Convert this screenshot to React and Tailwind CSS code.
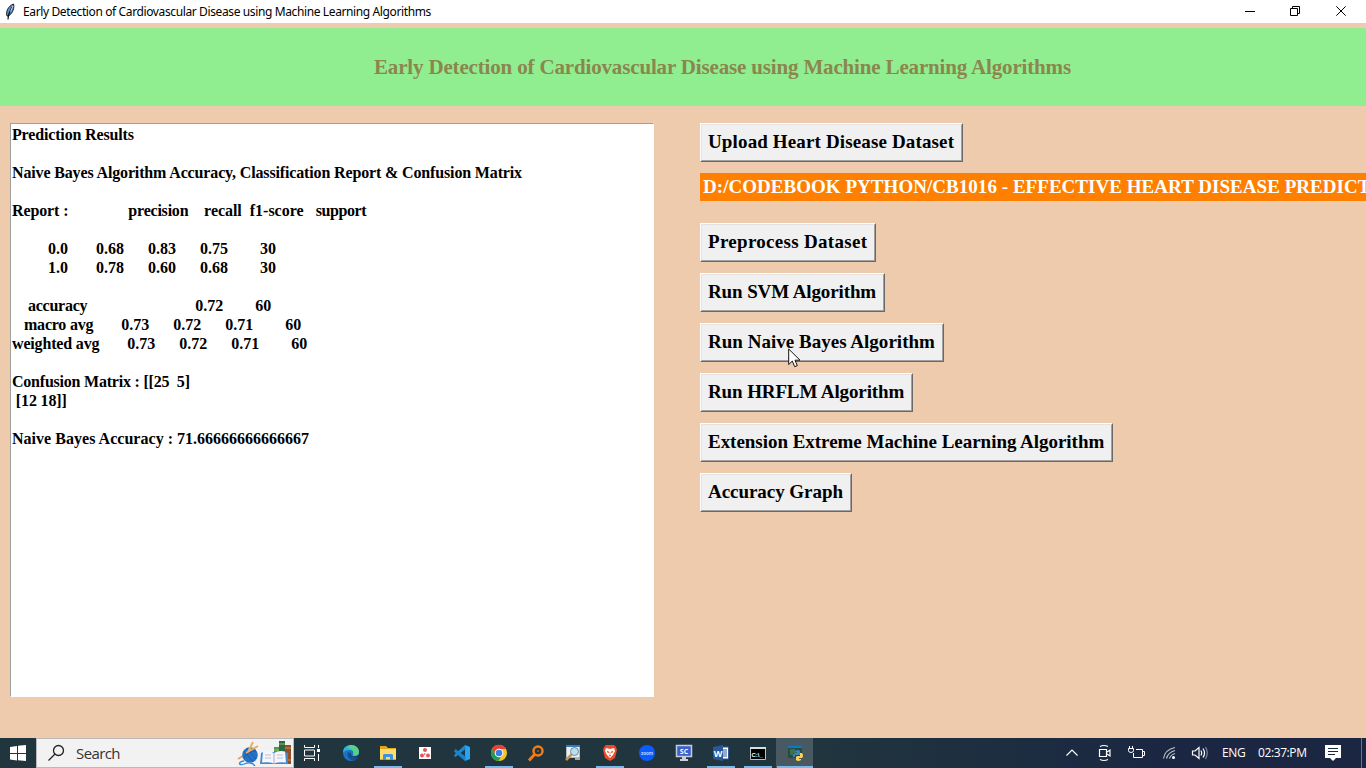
// each line is a list of [text, letter spacing]
const report = [
  [["Prediction Results", "tracking-[-0.16px]"]],
  [],
  [["Naive Bayes Algorithm Accuracy, Classification Report & Confusion Matrix", "tracking-[-0.145px]"]],
  [],
  [
    ["Report :", "tracking-[-0.12px]"],
    ["               "],
    ["precision", "tracking-[-0.22px]"],
    ["    recall", "tracking-[-0.05px]"],
    ["  f1-score"],
    ["   "],
    ["support", "tracking-[-0.4px]"],
  ],
  [],
  [["         0.0       0.68      0.83      0.75        30"]],
  [["         1.0       0.78      0.60      0.68        30"]],
  [],
  [["    "], ["accuracy", "tracking-[-0.25px]"], ["                           0.72        60"]],
  [["   "], ["macro avg", "tracking-[-0.22px]"], ["       0.73      0.72      0.71        60"]],
  [["weighted avg", "tracking-[-0.17px]"], ["       0.73      0.72      0.71        60"]],
  [],
  [["Confusion Matrix : ", "tracking-[-0.22px]"], ["[[25  5]", "tracking-[-0.2px]"]],
  [[" [12 18]]", "tracking-[-0.15px]"]],
  [],
  [["Naive Bayes Accuracy : ", "tracking-[0.03px]"], ["71.66666666666667"]],
];

const algorithmButtons = [
  { label: "Preprocess Dataset", size: "w-[176px] tracking-[0.3px]" },
  { label: "Run SVM Algorithm", size: "w-[185px] tracking-[-0.11px]" },
  { label: "Run Naive Bayes Algorithm", size: "w-[244px] tracking-[0.02px]" },
  { label: "Run HRFLM Algorithm", size: "w-[213px] tracking-[-0.12px]" },
  { label: "Extension Extreme Machine Learning Algorithm", size: "w-[413px] tracking-[-0.03px]" },
  { label: "Accuracy Graph", size: "w-[152px] tracking-[-0.05px]" },
];

const TkButton = ({ label, size }) => (
  <button
    className={`${size} h-[39px] border border-t-white border-l-white border-r-[#696969] border-b-[#696969] bg-[#f0f0f0]`}
  >
    <div className="flex h-full items-center border border-t-[#e3e3e3] border-l-[#e3e3e3] border-r-[#a0a0a0] border-b-[#a0a0a0] pb-0.5 pl-1.5 text-[19px] leading-none font-bold whitespace-pre">
      {label}
    </div>
  </button>
);

const TitleBar = () => (
  <div className="flex h-[23px] items-center bg-white pl-1 font-['Noto_Sans','Open_Sans',sans-serif]">
    <svg width="13" height="18" viewBox="0 0 13 18">
      <path d="M3 13C1.500 9 4 3 9.500 1c1 3-.2 9-5 12z" fill="#5b8fd0" stroke="#152033" />
      <path d="M4 16.500 4.500 12 8 4" fill="none" stroke="#0b1220" strokeWidth="1.200" />
      <path d="M6.500 8.500 9 3" stroke="#c7dcf4" />
    </svg>
    <div className="ml-1.5 text-[12px] leading-none tracking-[-0.38px] whitespace-pre text-black">
      Early Detection of Cardiovascular Disease using Machine Learning Algorithms
    </div>
    <svg className="ml-auto" width="126" height="20" viewBox="1240 0 126 20" fill="none" stroke="#000">
      <path d="M1245 9.500h10M1290.500 6.500h7v7h-7zM1292.500 6v-1.500h7v7h-2" />
      <path d="m1336.300 4.300 9.400 9.400m0-9.400-9.400 9.400" />
    </svg>
  </div>
);

const AppIcon = ({ children, open, active }) => (
  <div
    className={`flex h-[30px] w-[37px] flex-col items-center justify-between ${active ? "bg-[#485962]" : ""}`}
  >
    <svg className="mt-[6px]" width="18" height="18" viewBox="0 0 18 18">
      {children}
    </svg>
    <div className={`h-0.5 ${active ? "w-[36px]" : "w-7"} ${open ? "bg-[#76b9ed]" : ""}`} />
  </div>
);

const SearchBox = () => (
  <div className="flex h-[30px] w-[258px] items-center border border-[#b9b9b9] bg-[#f2f2f2]">
    <svg className="ml-[10px]" width="18" height="18" viewBox="0 0 18 18" fill="none" stroke="#222" strokeWidth="1.300">
      <circle cx="11.500" cy="6.500" r="5" />
      <path d="m8 10-6.500 6.500" />
    </svg>
    <div className="ml-[11px] text-[15px] leading-none tracking-[-0.6px] text-[#333]">Search</div>
    <svg className="ml-auto" width="56" height="28" viewBox="0 0 56 28">
      {/* yarn ball with needles */}
      <path d="m1 20 8-5" stroke="#e5a45d" strokeWidth="1.800" />
      <circle cx="13" cy="16" r="7.800" fill="#2671c4" />
      <path d="m7 12 9 11M10 9l9 11M7 19c3-5 7-7 12-7" stroke="#1a56a3" strokeWidth=".8" fill="none" />
      <path d="M9 14 21 7M11 13 16 3" stroke="#e9ad6a" strokeWidth="2" />
      <path d="M7 22c-6 1-6 5 0 3 5-2 9-1 11 2" stroke="#3186d8" strokeWidth="1.300" fill="none" />
      {/* standing books */}
      <path d="M37 8h5v10h-5z" fill="#4f9a50" />
      <path d="M42 2h6v18h-6z" fill="#28693f" />
      <path d="M42 5h6M37 11h5" stroke="#a5b45d" />
      <path d="M48 6h6v19h-6z" fill="#954d28" />
      <path d="M48 9h6m-6 12h6" stroke="#cf914b" />
      {/* open book */}
      <path d="m24 14 2-1h22l3 1v11H23z" fill="#4088d0" />
      <path d="M26 12.500q6-1.500 11 1.500 5-3 11-1.500l1 11q-7-1-12 1-5-2-12-1z" fill="#f5f5fb" />
      <path d="M28 16h6m-6 3h6m6-3h6m-6 3h6" stroke="#bfc1d8" />
      <path d="M37 14v10" stroke="#a7a9c9" />
    </svg>
  </div>
);

const Tray = () => (
  <div className="ml-auto flex h-[30px] items-center text-white">
    <svg width="154" height="30" viewBox="1060 0 154 30" fill="none" stroke="#fff" strokeWidth="1.200">
      <path d="m1066.500 17.500 5.500-5.500 5.500 5.500" />
      <path d="M1099.500 11.500h7v7h-7zM1107 14l3-2v6l-3-2M1100 8.500q4-2 8 0m-8 13q4 2 8 0" />
      <path d="M1136 11.500h6.500v8h-9V15M1143 13.500h1.500v4h-1.500" strokeWidth="1" />
      <path d="M1128.500 10.500h5v2q0 2-2.500 2t-2.500-2zM1129.500 10V8m3 2V8" strokeWidth="1" />
      <path d="M1163.500 20.500q1.500-9 11.500-11M1166.500 20.500q1.500-6 8.500-8M1169.500 20.500q1-3.500 5.500-5" stroke="#b9c0ca" />
      <circle cx="1173.500" cy="19.500" r="1.500" fill="#fff" stroke="none" />
      <path d="M1192.500 13h2.500l4-3.500v11l-4-3.500h-2.500zM1201 12.500q1.500 2.500 0 5M1203 10.500q3 4.500 0 9" />
      <path d="M1205.500 9q3.500 6 0 12" stroke="#7c8799" />
    </svg>
    <div className="ml-[8px] w-[36px] text-[12px] tracking-[-0.35px]">ENG</div>
    <div className="w-[67px] text-[12px] tracking-[-0.4px] whitespace-nowrap">02:37:PM</div>
    <svg width="41" height="30" viewBox="1325 0 41 30">
      <path d="M1325 7h16v13h-5l-3 3-3-3h-5z" fill="#fff" />
      <path d="M1328 10.500h10m-10 3h10m-10 3h7" stroke="#1b2841" />
      <path d="M1361.500 0v30" stroke="#69758a" />
    </svg>
  </div>
);

const Taskbar = () => (
  <div className="flex h-[30px] bg-linear-to-r from-[#20353e] from-60% to-[#1b2742] to-85% font-['Open_Sans','Noto_Sans',sans-serif]">
    <svg width="36" height="30" viewBox="0 0 36 30" fill="#fff">
      <path d="m10 9 7-1v7h-7zM18 7.800 26 7v8h-8zM10 16h7v6.500l-7-1zM18 16h8v7l-8-.8z" />
    </svg>
    <SearchBox />
    <AppIcon>
      <path d="M1.500 1v2.500h10V1M1.500 17v-2.500h10V17M1.500 6h10v6h-10zM15.500 1v3m0 6v7" transform="translate(-1 0)" fill="none" stroke="#fff" />
      <path d="M13 5h3v3h-3z" fill="#fff" />
    </AppIcon>
    <div className="ml-px flex">
      <AppIcon>
        <circle cx="9" cy="9" r="8" fill="#1b74c8" />
        <path d="M1 9C1 3 5 1 9 1c5 0 8 3.500 8 7 0 3-3 4-6.500 3.500C12.500 9 11 6 7.500 6 4 6 2 7 1 9z" fill="#2db2dc" />
        <path d="M8 1c6-.5 9 3.500 9 7 0 3-3 4-6.500 3.500C13 9 11 4 5 4z" fill="#58d184" />
        <path d="M6 8c-2 4 1 8.500 6 8.500 2-.5 3.500-2 4.500-4-4 2.500-9 1-8.500-3.500z" fill="#124f9c" />
        <path d="M9.500 7.500c-1.500 1.500-1 4 1.500 4.800 2 .5 4 .2 5.500-1l1-.8-1 2.200c-4 2.200-8.800.6-8.500-3.200z" fill="#20353e" />
      </AppIcon>
      <AppIcon open>
        <path d="M1 2h6l2 2h8v12H1z" fill="#e4a51b" />
        <path d="M1 5h16v10H1z" fill="#ffda6d" />
        <path d="M4 16v-5l1-1h8l1 1v5h-3v-3H7v3z" fill="#3c94dd" />
      </AppIcon>
      <AppIcon>
        <path d="M3 3h12v12H3z" fill="#fff" />
        <g fill="#e45459">
          <circle cx="9" cy="6" r="2" />
          <circle cx="6" cy="11.500" r="2" />
          <circle cx="12" cy="11.500" r="2" />
          <path d="m8 9 2 1-2 1z" />
        </g>
      </AppIcon>
      <AppIcon>
        <path d="m12 1 5 2v12l-5 2V1z" fill="#27a5f2" />
        <path d="m12 1-10 9-1 2 1.500 1L13 4.500z" fill="#168bd3" />
        <path d="m2.500 5 10.500 8-1 4L1 7.500z" fill="#1b83cb" />
      </AppIcon>
      <AppIcon open>
        <circle cx="9" cy="9" r="8" fill="#f4c52b" />
        <path d="M2 5A8 8 0 0 1 16 5H9L5.500 11z" fill="#e34234" />
        <path d="M2 5A8 8 0 0 0 8.500 17L12 11H6z" fill="#219b55" />
        <circle cx="9" cy="9" r="4.300" fill="#fff" />
        <circle cx="9" cy="9" r="3.300" fill="#3c7ce7" />
      </AppIcon>
      <AppIcon>
        <g fill="none" stroke="#f47b13">
          <circle cx="11" cy="7" r="4.500" strokeWidth="2.500" />
          <path d="m7.500 10.500-5.500 6" strokeWidth="3" />
        </g>
        <circle cx="11" cy="7" r="1" fill="#a9581d" />
      </AppIcon>
      <AppIcon>
        <path d="M2.500 1.500h13v12h-13z" fill="#eee" stroke="#b3bbc2" />
        <path d="M2 1h14v2H2z" fill="#367bb9" />
        <path d="m8 10-6 6" stroke="#c0985b" strokeWidth="2.500" />
        <circle cx="10.500" cy="7.500" r="4" fill="#b9def0" stroke="#718b9b" />
        <path d="M11 14h5v2h-5z" fill="#aaa" />
      </AppIcon>
      <AppIcon open>
        <path d="m5 1h8l2 2 1 3-2 8-5 3-5-3-2-8 1-3z" fill="#ef4a27" />
        <path d="m5 4 4 1 4-1 1 3-2 4-3 3-3-3-2-4z" fill="#fff" />
        <path d="m6 7 2 1-1 1zM12 7l-2 1 1 1zM9 8v3l-1 1h2l-1-1" fill="#ef4a27" stroke="#ef4a27" strokeWidth=".5" />
      </AppIcon>
      <AppIcon>
        <circle cx="9" cy="9" r="8" fill="#0b5cff" />
        <text x="9" y="10.500" textAnchor="middle" fontSize="4.500" fontWeight="600" fill="#dce7ff">zoom</text>
      </AppIcon>
      <AppIcon>
        <path d="M1.500 1.500h15v11h-15z" fill="#3e5ec9" stroke="#c5cce0" strokeWidth="1.500" />
        <path d="M7 13h4v2h2v2H5v-2h2z" fill="#cbd0d8" />
        <text x="9" y="9.500" textAnchor="middle" fontSize="7" fontWeight="700" fill="#fff">SC</text>
      </AppIcon>
      <AppIcon open>
        <path d="M9 3h7.500v12H9z" fill="#fff" stroke="#2b579a" />
        <path d="M11 6h4m-4 2h4m-4 2h4m-4 2h4" stroke="#2b579a" />
        <path d="m1 3 10-2v16L1 15z" fill="#2b579a" />
        <text x="6" y="12.500" textAnchor="middle" fontSize="9" fontWeight="700" fill="#fff">W</text>
      </AppIcon>
      <AppIcon open>
        <path d="M1.500 3.500h15v12h-15z" fill="#000" stroke="#b8bec2" />
        <path d="M1 3h16v2H1z" fill="#d8dcde" />
        <text x="2.500" y="12.500" fontSize="6" fontWeight="700" fill="#fff" fontFamily="Liberation Sans">C:\_</text>
      </AppIcon>
      <AppIcon open active>
        <path d="M2 2h14v12H2z" fill="#274b3d" />
        <path d="M2 2h14v2H2z" fill="#087bc7" />
        <path d="M4 6h5m-5 2h7m-7 2h3" stroke="#51966a" />
        <path d="M9 7q3-2 5 0v4H9v2H7q-1-3 2-4h2V8H9z" fill="#3b83bd" />
        <path d="M14 9h2q2 3 0 5h-3v1h2v1q-3 2-5 0v-3q0-1 2-1h2z" fill="#ffd34e" />
      </AppIcon>
    </div>
    <Tray />
  </div>
);

export default function App() {
  return (
    <div className="relative flex h-[768px] w-[1366px] flex-col overflow-hidden bg-[#eecbad] font-['Liberation_Serif',serif] text-black">
      <TitleBar />
      <div className="mt-[5px] flex h-[78px] shrink-0 items-center bg-[#90ee90] pt-0.5 pl-[374px] text-[21px] font-bold tracking-[-0.16px] whitespace-pre text-[#8b864e]">
        Early Detection of Cardiovascular Disease using Machine Learning Algorithms
      </div>
      <div className="flex min-h-0 flex-1 pt-[17px] pl-[10px]">
        <div className="h-[574px] w-[644px] shrink-0 border border-t-[#a0a0a0] border-r-white border-b-white border-l-[#a0a0a0] bg-white pt-px pl-px text-[16px] leading-[19px] font-bold whitespace-pre">
          {report.map((line, i) => (
            <div key={i} className="h-[19px]">
              {line.map(([text, tracking], j) => (
                <span key={j} className={tracking}>
                  {text}
                </span>
              ))}
            </div>
          ))}
        </div>
        <div className="ml-[46px] flex w-[666px] flex-col items-start">
          <TkButton label="Upload Heart Disease Dataset" size="w-[263px] tracking-[0.14px]" />
          <div className="mt-[11px] mb-[22px] flex h-7 w-full shrink-0 items-center overflow-hidden bg-[#ff8000] pl-[3px] text-[19px] font-bold tracking-[0.04px] whitespace-pre text-white">
            D:/CODEBOOK PYTHON/CB1016 - EFFECTIVE HEART DISEASE PREDICT
          </div>
          <div className="flex flex-col gap-[11px]">
            {algorithmButtons.map((b) => (
              <TkButton key={b.label} {...b} />
            ))}
          </div>
        </div>
      </div>
      <Taskbar />
      {/* mouse pointer */}
      <svg className="absolute top-[348px] left-[788px]" width="14" height="21" viewBox="0 0 14 21">
        <path d="M.7 1v15.500l3.600-3.400 2.400 5.600 2.600-1.100-2.300-5.400h5z" fill="#fff" stroke="#111" />
      </svg>
    </div>
  );
}
